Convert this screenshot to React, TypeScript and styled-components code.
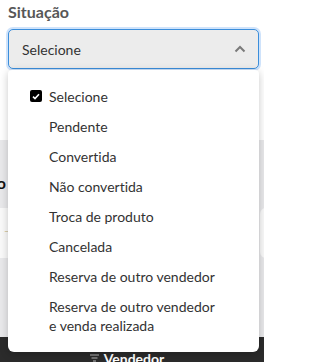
import React from "react";
import styled, { createGlobalStyle } from "styled-components";

const GlobalStyle = createGlobalStyle`
  html, body {
    margin: 0;
    padding: 0;
    background: #ffffff;
    font-family: "Lato", "Open Sans", sans-serif;
    font-variant-ligatures: none;
    color: #333;
    overflow: hidden;
  }
`;

const options = [
  "Selecione",
  "Pendente",
  "Convertida",
  "Não convertida",
  "Troca de produto",
  "Cancelada",
  "Reserva de outro vendedor",
  "Reserva de outro vendedor e venda realizada",
];

const App = () => {
  const selected = "Selecione";
  return (
    <Page>
      <GlobalStyle />
      <Field>
        <Label>Situação</Label>
        <SelectWrap>
          <SelectBox>
            <span>Selecione</span>
            <svg width="12" height="8" viewBox="0 0 12 8">
              <path
                d="M1.5 6.5 L6 2 L10.5 6.5"
                fill="none"
                stroke="#7a7a7a"
                strokeWidth="2"
              />
            </svg>
          </SelectBox>
          <Menu>
            {options.map((o) => (
              <Option key={o}>
                {o === selected && (
                  <Check>
                    <svg width="8" height="7" viewBox="0 0 8 7">
                      <path
                        d="M1 3.6 L3 5.5 L7 1.3"
                        fill="none"
                        stroke="#fff"
                        strokeWidth="1.6"
                      />
                    </svg>
                  </Check>
                )}
                <OptionText>{o}</OptionText>
              </Option>
            ))}
          </Menu>
        </SelectWrap>
      </Field>

      <Section>
        <HeadingClip>
          <Heading>Período</Heading>
        </HeadingClip>
        <Cards>
          <Card>
            <Tick>–</Tick>
          </Card>
          <Card $peek />
        </Cards>
      </Section>

      <BottomBar>
        <svg width="9" height="8" viewBox="0 0 9 8">
          <path d="M0 1h9M1.5 4h6M3 7h3" stroke="#8a8a8a" strokeWidth="1.6" />
        </svg>
        <BarLabel>Vendedor</BarLabel>
      </BottomBar>
    </Page>
  );
};

export default App;

const Page = styled.div`
  width: 264px;
  height: 362px;
  display: flex;
  flex-direction: column;
  overflow: hidden;
`;

const Field = styled.div`
  padding: 2px 5px 0 8px;
  height: 140px;
  box-sizing: border-box;
`;

const Label = styled.div`
  font-size: 16px;
  font-weight: 700;
  color: #575757;
  line-height: 20px;
  margin-bottom: 7px;
`;

const SelectWrap = styled.div`
  position: relative;
`;

const SelectBox = styled.div`
  height: 40px;
  box-sizing: border-box;
  border: 1px solid #3b8edb;
  border-radius: 5px;
  box-shadow: 0 0 0 2px #cfe3fb;
  background: #ececec;
  display: flex;
  align-items: center;
  justify-content: space-between;
  padding: 0 12px 0 13px;
  font-size: 14px;
  color: #333;
`;

const Menu = styled.ul`
  position: absolute;
  top: 41px;
  left: 0;
  right: 0;
  margin: 0;
  padding: 11px 0 12px;
  list-style: none;
  background: #fff;
  border-radius: 4px 4px 6px 6px;
  box-shadow: 0 2px 8px rgba(0, 0, 0, 0.22);
  z-index: 2;
`;

const Option = styled.li`
  position: relative;
  padding: 5.5px 38px 5.5px 41px;
  font-size: 14px;
  line-height: 19px;
  color: #333;
`;

const OptionText = styled.span`
  display: block;
`;

const Check = styled.span`
  position: absolute;
  left: 22px;
  top: 9px;
  width: 12px;
  height: 12px;
  border-radius: 2px;
  background: #000;
  display: flex;
  align-items: center;
  justify-content: center;
`;

const Section = styled.div`
  flex: 1;
  background: #e9e9eb;
  display: flex;
  flex-direction: column;
  overflow: hidden;
`;

const HeadingClip = styled.div`
  width: 6px;
  height: 68px;
  overflow: hidden;
  display: flex;
  justify-content: flex-end;
  align-items: center;
  padding-top: 16px;
  box-sizing: border-box;
`;

const Heading = styled.div`
  font-size: 16px;
  font-weight: 700;
  color: #111;
  white-space: nowrap;
`;

const Cards = styled.div`
  display: flex;
  gap: 8px;
  height: 50px;
`;

const Card = styled.div<{ $peek?: boolean }>`
  flex: ${(p) => (p.$peek ? "0 0 4px" : "0 0 252px")};
  background: #fafafa;
  border-radius: ${(p) => (p.$peek ? "6px 0 0 6px" : "0 6px 6px 0")};
  padding: 10px 4px;
  box-sizing: border-box;
`;

const Tick = styled.span`
  font-size: 9px;
  color: #c9bc8f;
`;

const BottomBar = styled.div`
  height: 25px;
  background: #2b2b2b;
  display: flex;
  align-items: flex-end;
  justify-content: center;
  gap: 5px;
  padding-right: 10px;
  box-sizing: border-box;
  overflow: hidden;
`;

const BarLabel = styled.span`
  color: #fff;
  font-weight: 700;
  font-size: 14px;
  line-height: 10px;
  height: 8px;
`;
